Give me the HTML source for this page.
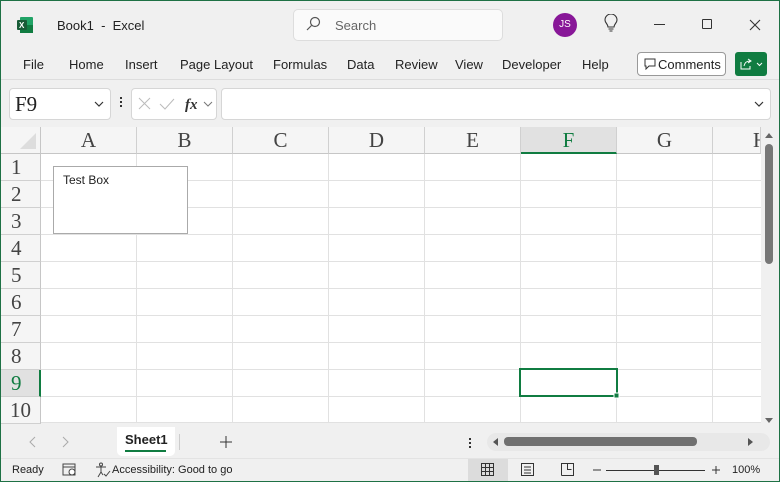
<!DOCTYPE html>
<html><head><style>
*{margin:0;padding:0;box-sizing:border-box}
body{width:780px;height:482px;overflow:hidden;background:#f0f0f0;font-family:"Liberation Sans",sans-serif;font-size:13px;color:#222;position:relative}
.a{position:absolute}
.frame{position:absolute;left:0;top:0;width:780px;height:482px;border:1px solid #1e7145;pointer-events:none;z-index:9}
.menu span{position:absolute;top:57px;font-size:13px}
.cell{position:absolute;border-right:1px solid #dadada;border-bottom:1px solid #dadada}
.ch{position:absolute;top:127px;height:27px;border-right:1px solid #d0d0d0;border-bottom:1px solid #c6c6c6;background:#f5f5f5;font-family:"Liberation Serif",serif;font-size:21px;text-align:center;line-height:27px;color:#444}
.rh{position:absolute;left:1px;width:40px;height:27px;border-right:1px solid #c6c6c6;border-bottom:1px solid #d0d0d0;background:#f5f5f5;font-family:"Liberation Serif",serif;font-size:21px;line-height:27px;padding-left:10px;color:#444}
</style></head><body>
<div class="frame"></div>
<!-- title bar -->
<svg class="a" style="left:16px;top:16px" width="18" height="18"><rect x="4" y="1" width="13" height="16" rx="1" fill="#21a366"/><rect x="4" y="9" width="13" height="8" fill="#107c41"/><rect x="1" y="4" width="10" height="10" rx="1" fill="#185c37"/><text x="3" y="12" font-size="8" fill="#fff" font-family="Liberation Sans" font-weight="bold">X</text></svg>
<div class="a" style="left:57px;top:18px;font-size:13px">Book1&nbsp; -&nbsp; Excel</div>
<div class="a" style="left:293px;top:9px;width:210px;height:32px;background:#fafafa;border:1px solid #ddd;border-radius:5px"></div>
<svg class="a" style="left:305px;top:16px" width="16" height="16"><circle cx="10" cy="6" r="4.5" fill="none" stroke="#555" stroke-width="1.2"/><line x1="6.5" y1="9.5" x2="2" y2="14" stroke="#555" stroke-width="1.2"/></svg>
<div class="a" style="left:335px;top:18px;color:#666">Search</div>
<div class="a" style="left:553px;top:13px;width:24px;height:24px;border-radius:50%;background:#881798;color:#fff;font-size:10px;text-align:center;line-height:24px">JS</div>
<svg class="a" style="left:603px;top:14px" width="16" height="20"><path d="M5 13 C5 10 2 9 2 6 A6 6 0 0 1 14 6 C14 9 11 10 11 13 Z" fill="none" stroke="#333" stroke-width="1.1"/><line x1="5.5" y1="15" x2="10.5" y2="15" stroke="#333"/><line x1="6.5" y1="17" x2="9.5" y2="17" stroke="#333"/></svg>
<div class="a" style="left:654px;top:24px;width:11px;height:1px;background:#333"></div>
<div class="a" style="left:702px;top:19px;width:10px;height:10px;border:1px solid #333;border-radius:1px"></div>
<svg class="a" style="left:749px;top:19px" width="12" height="12"><path d="M1 1L11 11M11 1L1 11" stroke="#333" stroke-width="1.1"/></svg>
<!-- menu -->
<div class="menu"><span style="left:23px">File</span><span style="left:69px">Home</span><span style="left:125px">Insert</span><span style="left:180px">Page Layout</span><span style="left:273px">Formulas</span><span style="left:347px">Data</span><span style="left:395px">Review</span><span style="left:455px">View</span><span style="left:502px">Developer</span><span style="left:582px">Help</span></div>
<div class="a" style="left:637px;top:52px;width:89px;height:24px;border:1px solid #999;border-radius:4px;background:#fff"></div>
<svg class="a" style="left:644px;top:58px" width="12" height="12"><path d="M1 1H11V8H5L2 11V8H1Z" fill="none" stroke="#333"/></svg>
<div class="a" style="left:658px;top:57px">Comments</div>
<div class="a" style="left:735px;top:52px;width:32px;height:24px;background:#107c41;border-radius:3px"></div>
<svg class="a" style="left:739px;top:57px" width="26" height="14"><path d="M2 5V12H11V9" fill="none" stroke="#fff"/><path d="M5 9C6 5 8 4 11 4M9 2L12 4L9 6" fill="none" stroke="#fff"/><path d="M18 6L20.5 8.5L23 6" fill="none" stroke="#fff"/></svg>
<div class="a" style="left:0;top:79px;width:780px;height:1px;background:#ddd"></div>
<!-- formula bar -->
<div class="a" style="left:9px;top:88px;width:102px;height:32px;background:#fff;border:1px solid #d6d6d6;border-radius:4px"></div>
<div class="a" style="left:15px;top:92px;font-family:'Liberation Serif',serif;font-size:21px">F9</div>
<svg class="a" style="left:94px;top:100px" width="12" height="8"><path d="M1 2L5 6L9 2" fill="none" stroke="#333" stroke-width="1.2"/></svg>
<div class="a" style="left:120px;top:97px;width:2px;height:2px;background:#333;box-shadow:0 4px #333,0 8px #333"></div>
<div class="a" style="left:131px;top:88px;width:86px;height:32px;background:#fff;border:1px solid #d6d6d6;border-radius:4px"></div>
<svg class="a" style="left:136px;top:95px" width="80" height="18"><path d="M3 3L14 14M14 3L3 14" stroke="#bbb"/><path d="M24 9L29 14L38 4" fill="none" stroke="#bbb"/><text x="49" y="14" font-family="Liberation Serif" font-style="italic" font-weight="bold" font-size="15" fill="#333">fx</text><path d="M68 7L72 11L76 7" fill="none" stroke="#777"/></svg>
<div class="a" style="left:221px;top:88px;width:550px;height:32px;background:#fff;border:1px solid #d6d6d6;border-radius:4px"></div>
<svg class="a" style="left:754px;top:100px" width="12" height="8"><path d="M1 2L5 6L9 2" fill="none" stroke="#333" stroke-width="1.2"/></svg>
<!-- grid -->
<div class="a" style="left:1px;top:127px;width:760px;height:296px;background:#fff"></div>
<div class="a" style="left:1px;top:127px;width:40px;height:27px;background:#f5f5f5;border-right:1px solid #c6c6c6;border-bottom:1px solid #c6c6c6"></div>
<svg class="a" style="left:18px;top:131px" width="20" height="20"><path d="M18 2V18H2Z" fill="#ddd"/></svg>
<div class="ch" style="left:41px;width:96px">A</div>
<div class="ch" style="left:137px;width:96px">B</div>
<div class="ch" style="left:233px;width:96px">C</div>
<div class="ch" style="left:329px;width:96px">D</div>
<div class="ch" style="left:425px;width:96px">E</div>
<div class="ch" style="left:521px;width:96px;background:#e1e1e1;color:#107c41;border-bottom:2px solid #107c41">F</div>
<div class="ch" style="left:617px;width:96px">G</div>
<div class="ch" style="left:713px;width:48px;text-align:left;padding-left:40px;overflow:hidden">H</div>
<div class="rh" style="top:154px">1</div>
<div class="rh" style="top:181px">2</div>
<div class="rh" style="top:208px">3</div>
<div class="rh" style="top:235px">4</div>
<div class="rh" style="top:262px">5</div>
<div class="rh" style="top:289px">6</div>
<div class="rh" style="top:316px">7</div>
<div class="rh" style="top:343px">8</div>
<div class="rh" style="top:370px;background:#e1e1e1;color:#107c41;border-right:2px solid #107c41">9</div>
<div class="rh" style="top:397px;padding-left:9px">10</div>
<svg class="a" style="left:41px;top:154px" width="720" height="269">
<g stroke="#e1e1e1" stroke-width="1">
<line x1="95.5" y1="0" x2="95.5" y2="269"/><line x1="191.5" y1="0" x2="191.5" y2="269"/><line x1="287.5" y1="0" x2="287.5" y2="269"/><line x1="383.5" y1="0" x2="383.5" y2="269"/><line x1="479.5" y1="0" x2="479.5" y2="269"/><line x1="575.5" y1="0" x2="575.5" y2="269"/><line x1="671.5" y1="0" x2="671.5" y2="269"/>
<line x1="0" y1="26.5" x2="720" y2="26.5"/><line x1="0" y1="53.5" x2="720" y2="53.5"/><line x1="0" y1="80.5" x2="720" y2="80.5"/><line x1="0" y1="107.5" x2="720" y2="107.5"/><line x1="0" y1="134.5" x2="720" y2="134.5"/><line x1="0" y1="161.5" x2="720" y2="161.5"/><line x1="0" y1="188.5" x2="720" y2="188.5"/><line x1="0" y1="215.5" x2="720" y2="215.5"/><line x1="0" y1="242.5" x2="720" y2="242.5"/><line x1="0" y1="268.5" x2="720" y2="268.5"/>
</g>
<rect x="479" y="215" width="97" height="27" fill="none" stroke="#107c41" stroke-width="2"/>
<rect x="573" y="239" width="5" height="5" fill="#107c41" stroke="#fff"/>
</svg>
<div class="a" style="left:53px;top:166px;width:135px;height:68px;background:#fff;border:1px solid #aaa;padding:6px 9px;font-size:12px">Test Box</div>
<!-- v scrollbar -->
<div class="a" style="left:761px;top:127px;width:18px;height:303px;background:#f0f0f0"></div>
<svg class="a" style="left:763px;top:130px" width="12" height="10"><path d="M2 8L6 3L10 8Z" fill="#666"/></svg>
<div class="a" style="left:765px;top:144px;width:8px;height:120px;background:#777;border-radius:4px"></div>
<svg class="a" style="left:763px;top:416px" width="12" height="10"><path d="M2 2L6 7L10 2Z" fill="#666"/></svg>
<!-- sheet tabs -->
<svg class="a" style="left:26px;top:435px" width="50" height="14"><path d="M9 2L4 7L9 12" fill="none" stroke="#aaa"/><path d="M37 2L42 7L37 12" fill="none" stroke="#aaa"/></svg>
<div class="a" style="left:117px;top:427px;width:58px;height:29px;background:#fff;border-radius:0 0 5px 5px"></div>
<div class="a" style="left:125px;top:432px;font-weight:bold;font-size:13px">Sheet1</div>
<div class="a" style="left:125px;top:450px;width:41px;height:2px;background:#107c41"></div>
<div class="a" style="left:179px;top:434px;width:1px;height:16px;background:#ccc"></div>
<svg class="a" style="left:220px;top:436px" width="12" height="12"><path d="M6 0V12M0 6H12" stroke="#333"/></svg>
<div class="a" style="left:469px;top:438px;width:2px;height:2px;background:#333;box-shadow:0 4px #333,0 8px #333"></div>
<div class="a" style="left:487px;top:433px;width:283px;height:18px;background:#e8e8e8;border-radius:9px"></div>
<svg class="a" style="left:490px;top:437px" width="280" height="10"><path d="M8 1L3 5L8 9Z" fill="#555"/><path d="M258 1L263 5L258 9Z" fill="#555"/></svg>
<div class="a" style="left:504px;top:437px;width:193px;height:9px;background:#707070;border-radius:4px"></div>
<!-- status bar -->
<div class="a" style="left:1px;top:458px;width:778px;height:23px;background:#f0f0f0;border-top:1px solid #e3e3e3"></div>
<div class="a" style="left:12px;top:464px;font-size:11px">Ready</div>
<svg class="a" style="left:62px;top:463px" width="16" height="14"><rect x="1" y="1" width="12" height="11" fill="none" stroke="#444"/><line x1="1" y1="4" x2="13" y2="4" stroke="#444"/><circle cx="10" cy="9" r="3" fill="#fff" stroke="#444"/></svg>
<svg class="a" style="left:95px;top:462px" width="16" height="16"><circle cx="6" cy="2.5" r="1.5" fill="none" stroke="#444"/><path d="M1 5H11M6 5V10L3 15M6 10L8 13M9 12L11 14L15 9" fill="none" stroke="#444"/></svg>
<div class="a" style="left:112px;top:464px;font-size:11px">Accessibility: Good to go</div>
<div class="a" style="left:468px;top:459px;width:40px;height:22px;background:#dcdcdc"></div>
<svg class="a" style="left:480px;top:462px" width="100" height="16"><g fill="none" stroke="#333"><rect x="1.5" y="1.5" width="12" height="12"/><path d="M5.5 1.5V13.5M9.5 1.5V13.5M1.5 5.5H13.5M1.5 9.5H13.5"/><rect x="41.5" y="1.5" width="12" height="12"/><path d="M44 5H51M44 8H51M44 11H51"/><path d="M81.5 13.5V1.5H93.5V13.5H81.5M87.5 1.5V7.5H91.5"/></g></svg>
<svg class="a" style="left:592px;top:464px" width="130" height="12"><path d="M1 6H9M14 6.5H113M120 6H128M124 2V10" stroke="#333"/><rect x="62" y="1" width="5" height="10" fill="#555"/></svg>
<div class="a" style="left:732px;top:464px;font-size:11px">100%</div>
</body></html>
